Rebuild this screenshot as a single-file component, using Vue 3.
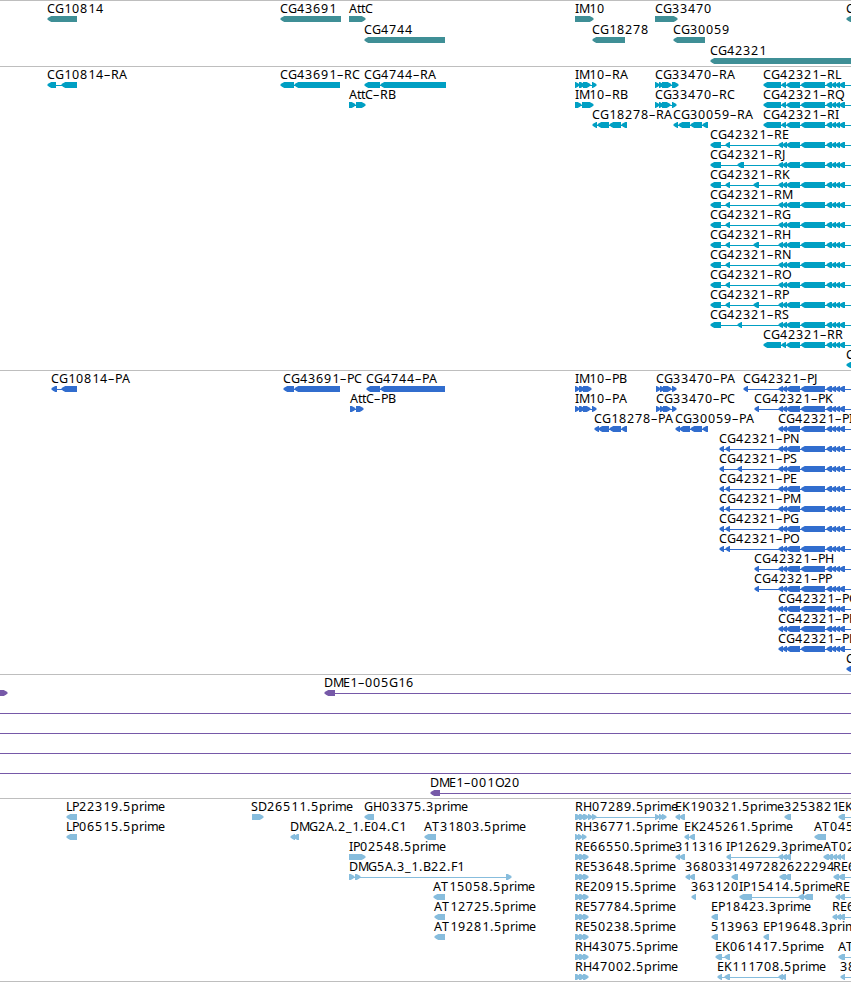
<script setup>
// Feature: [row, label, label x, exons, direction, line end]
// Exons are [start, end] pairs in track pixels.
const EDGE = 860

// exons shared by every CG42321 isoform
const tail = [[786, 800], [800.5, 825], [826, 832], [831, 836], [835, 840], [839, 845]]
const core = [[778, 783], [782, 787], ...tail]
const long = [[763, 781], [781, 786], ...tail]

const iso = (row, suffix, x, exons) => [row, 'CG42321-' + suffix, x, exons, 'l', EDGE]

const e1 = [[710, 721], [725, 730], ...core]
const e2 = [[710, 721], [725, 730], [753, 759], ...core]
const p1 = [[719, 724], [725, 730], ...core]
const p2 = [[754, 759], ...core]
const short = [[575, 581], [579, 585], [583, 589]]

const tracks = [
  {
    id: 'gene',
    color: '#3f8f96',
    height: 66,
    pitch: 21,
    features: [
      [0, 'CG10814', 47, [[47, 77]], 'l'],
      [0, 'CG43691', 280, [[280, 341]], 'l'],
      [0, 'AttC', 349, [[349, 366]], 'r'],
      [0, 'IM10', 575, [[575, 594]], 'r'],
      [0, 'CG33470', 655, [[655, 678]], 'r'],
      [0, 'C', 846, [[846, EDGE]], 'l'],
      [1, 'CG4744', 364, [[364, 445]], 'l'],
      [1, 'CG18278', 592, [[592, 625]], 'l'],
      [1, 'CG30059', 673, [[673, 705]], 'l'],
      [2, 'CG42321', 710, [[710, EDGE]], 'l'],
    ],
  },
  {
    id: 'transcript',
    color: '#009fc3',
    height: 304,
    pitch: 20,
    features: [
      [0, 'CG10814-RA', 47, [[47, 56], [61, 77]], 'l'],
      [0, 'CG43691-RC', 280, [[280, 294], [294, 340]], 'l'],
      [0, 'CG4744-RA', 364, [[364, 380], [380, 446]], 'l'],
      [0, 'IM10-RA', 575, [[575, 580], [579, 585], [583, 591], [592, 597]], 'r'],
      [0, 'CG33470-RA', 655, [[655, 660], [659, 664], [662, 672], [672, 679]], 'r'],
      iso(0, 'RL', 763, long),
      [1, 'AttC-RB', 349, [[349, 356], [356, 366]], 'r'],
      [1, 'IM10-RB', 575, [[575, 582], [582, 594]], 'r'],
      [1, 'CG33470-RC', 655, [[655, 660], [659, 664], [662, 671], [672, 677]], 'r'],
      iso(1, 'RQ', 763, long),
      [2, 'CG18278-RA', 592, [[592, 597], [597, 609], [609, 621], [621, 627]], 'l'],
      [2, 'CG30059-RA', 673, [[673, 678], [678, 690], [690, 702], [702, 708]], 'l'],
      iso(2, 'RI', 763, long),
      iso(3, 'RE', 710, e1),
      iso(4, 'RJ', 710, [[710, 721], [737, 744], ...core]),
      iso(5, 'RK', 710, e2),
      iso(6, 'RM', 710, e1),
      iso(7, 'RG', 710, e1),
      iso(8, 'RH', 710, e2),
      iso(9, 'RN', 710, e1),
      iso(10, 'RO', 710, e1),
      iso(11, 'RP', 710, e2),
      iso(12, 'RS', 710, [[710, 721], [737, 742], ...core]),
      iso(13, 'RR', 763, long),
      [14, 'C', 846, [[846, EDGE]], 'l'],
    ],
  },
  {
    id: 'protein',
    color: '#316dce',
    height: 304,
    pitch: 20,
    features: [
      [0, 'CG10814-PA', 51, [[51, 57], [61, 77]], 'l'],
      [0, 'CG43691-PC', 283, [[283, 294], [294, 340]], 'l'],
      [0, 'CG4744-PA', 366, [[366, 380], [380, 445]], 'l'],
      [0, 'IM10-PB', 575, [[575, 580], [579, 585], [583, 592]], 'r'],
      [0, 'CG33470-PA', 656, [[656, 661], [660, 665], [663, 672], [672, 677]], 'r'],
      iso(0, 'PJ', 743, [[743, 748], ...core]),
      [1, 'AttC-PB', 350, [[350, 356], [356, 364]], 'r'],
      [1, 'IM10-PA', 575, [[575, 580], [579, 585], [583, 591], [592, 597]], 'r'],
      [1, 'CG33470-PC', 656, [[656, 661], [660, 665], [663, 671], [672, 677]], 'r'],
      iso(1, 'PK', 754, p2),
      [2, 'CG18278-PA', 594, [[594, 599], [598, 609], [609, 621], [621, 627]], 'l'],
      [2, 'CG30059-PA', 675, [[675, 680], [679, 690], [690, 702], [702, 708]], 'l'],
      iso(2, 'PI', 778, core),
      iso(3, 'PN', 719, p1),
      iso(4, 'PS', 719, [[719, 724], [737, 742], ...core]),
      iso(5, 'PE', 719, p1),
      iso(6, 'PM', 719, p1),
      iso(7, 'PG', 719, p1),
      iso(8, 'PO', 719, p1),
      iso(9, 'PH', 754, p2),
      iso(10, 'PP', 754, p2),
      iso(11, 'PQ', 778, core),
      iso(12, 'PR', 778, core),
      iso(13, 'PL', 778, core),
      [14, 'C', 846, [[846, EDGE]], 'l'],
    ],
  },
  {
    id: 'bac',
    color: '#7659a8',
    height: 124,
    pitch: 20,
    features: [
      [0, '', 0, [[-10, 8]], 'r'],
      [0, 'DME1-005G16', 324, [[324, 335]], 'l', EDGE],
      [1, '', 0, [], 'l', EDGE],
      [2, '', 0, [], 'l', EDGE],
      [3, '', 0, [], 'l', EDGE],
      [4, '', 0, [], 'l', EDGE],
      [5, 'DME1-001O20', 430, [[430, 440]], 'l', EDGE],
    ],
  },
  {
    id: 'est',
    color: '#87bddd',
    height: 183,
    pitch: 20,
    features: [
      [0, 'LP22319.5prime', 66, [[66, 77]], 'l'],
      [0, 'SD26511.5prime', 251, [[252, 264]], 'r'],
      [0, 'GH03375.3prime', 364, [[364, 374]], 'l'],
      [0, 'RH07289.5prime', 575, [[575, 581], [579, 585], [583, 589], [588, 593], [592, 597], [655, 660], [659, 664], [662, 667]], 'r'],
      [0, 'EK190321.5prime', 675, [[675, 680], [679, 685]], 'l'],
      [0, '3253821', 784, [[784, 791]], 'l'],
      [0, 'EK', 838, [[838, 845]], 'l', EDGE],
      [1, 'LP06515.5prime', 66, [[66, 77]], 'l'],
      [1, 'DMG2A.2_1.E04.C1', 290, [[290, 295], [293, 299]], 'l'],
      [1, 'AT31803.5prime', 424, [[424, 436]], 'l'],
      [1, 'RH36771.5prime', 575, [[575, 580], [578, 583], [582, 587]], 'r'],
      [1, 'EK245261.5prime', 684, [[684, 689], [689, 695]], 'l'],
      [1, 'AT045', 814, [[814, 826]], 'l'],
      [2, 'IP02548.5prime', 349, [[349, 366]], 'r'],
      [2, 'RE66550.5prime', 575, short, 'r'],
      [2, '311316', 675, [[675, 680], [679, 685]], 'l'],
      [2, 'IP12629.3prime', 726, [[726, 731], [778, 783], [782, 787], [785, 791]], 'l'],
      [2, 'AT02', 823, [[823, 829], [827, 833], [832, 837], [836, 841], [840, 845]], 'l'],
      [3, 'DMG5A.3_1.B22.F1', 349, [[349, 355], [355, 361], [506, 512]], 'r'],
      [3, 'RE53648.5prime', 575, short, 'r'],
      [3, '368033', 685, [[685, 690], [689, 695]], 'l'],
      [3, '149728', 731, [[731, 738]], 'l'],
      [3, '2622294', 779, [[779, 786], [784, 791]], 'l'],
      [3, 'RE6', 833, [[833, 839], [838, 845]], 'l', EDGE],
      [4, 'AT15058.5prime', 433, [[433, 445]], 'l'],
      [4, 'RE20915.5prime', 575, short, 'r'],
      [4, '363120', 691, [[691, 696]], 'l'],
      [4, 'IP15414.5prime', 739, [[739, 752], [798, 804], [803, 813]], 'l'],
      [4, 'RE', 835, [[835, 840], [839, 845]], 'l', EDGE],
      [5, 'AT12725.5prime', 434, [[434, 445]], 'l'],
      [5, 'RE57784.5prime', 575, short, 'r'],
      [5, 'EP18423.3prime', 711, [[711, 718]], 'l'],
      [5, 'RE6', 832, [[832, 837], [836, 841], [839, 845]], 'l', EDGE],
      [6, 'AT19281.5prime', 434, [[434, 445]], 'l'],
      [6, 'RE50238.5prime', 575, short, 'r'],
      [6, '513963', 711, [[711, 718]], 'l'],
      [6, 'EP19648.3prim', 763, [[763, 769]], 'l'],
      [7, 'RH43075.5prime', 575, short, 'r'],
      [7, 'EK061417.5prime', 715, [[715, 722], [724, 730]], 'l'],
      [7, 'AT', 838, [[838, 845]], 'l', EDGE],
      [8, 'RH47002.5prime', 575, short, 'r'],
      [8, 'EK111708.5prime', 717, [[717, 722], [724, 730], [778, 783], [781, 786]], 'l'],
      [8, '38', 840, [[840, 845]], 'l', EDGE],
    ],
  },
]

// whole-pixel advances, so labels keep an even rhythm
const advance = {
  A: 8, B: 8, C: 8, D: 9, E: 7, F: 6, G: 9, H: 9, I: 4, J: 4, K: 8, L: 6, M: 10,
  N: 9, O: 9, P: 7, Q: 9, R: 8, S: 7, T: 8, '-': 7, '.': 4, _: 6,
  t: 4, p: 8, r: 5, i: 3, m: 11, e: 7,
}

function glyphX(label, x) {
  const out = []
  for (const ch of label) {
    out.push(ch === '1' ? x + 0.5 : x)
    x += advance[ch] ?? 8
  }
  return out.join(' ')
}

// the short hyphen gets lost between such widely set capitals
const display = (label) => label.replace('-', '–')

// block with a slightly rounded nose
function arrow([a, b], dir, top) {
  const tip = Math.min(5, b - a)
  const s = dir === 'l' ? 1 : -1
  const [nose, back] = dir === 'l' ? [a, b] : [b, a]
  const bulge = nose + s * tip * 0.4
  const shoulder = nose + s * tip * 0.85
  return [
    [nose, top + 3],
    [bulge, top + 1.2],
    [shoulder, top],
    [back, top],
    [back, top + 6],
    [shoulder, top + 6],
    [bulge, top + 4.8],
  ].join(' ')
}

function lineStart(f) {
  return f[3].length ? f[3][0][0] + 3 : 0
}

function lineEnd(f) {
  return f[5] ?? f[3][f[3].length - 1][1] - 3
}
</script>

<template>
  <main class="browser">
    <section v-for="t in tracks" :key="t.id" class="track">
      <svg class="canvas" width="851" :height="t.height - 1">
        <g v-for="(f, i) in t.features" :key="i">
          <rect
            v-if="f[5] || f[3].length > 1"
            :x="lineStart(f)"
            :y="f[0] * t.pitch + 18"
            :width="lineEnd(f) - lineStart(f)"
            height="1"
            :fill="t.color"
          />
          <polygon
            v-for="(e, j) in f[3]"
            :key="j"
            :points="arrow(e, f[4], f[0] * t.pitch + 15)"
            :fill="t.color"
          />
          <text v-if="f[1]" class="label" :x="glyphX(f[1], f[2])" :y="f[0] * t.pitch + 12">{{ display(f[1]) }}</text>
        </g>
      </svg>
    </section>
  </main>
</template>

<style>
body {
  margin: 0;
  background: #fff;
}
</style>

<style scoped>
.browser {
  width: 851px;
  height: 982px;
  overflow: hidden;
  background: #fff;
}

.track {
  border-top: 1px solid #bebebe;
}

.track:last-child {
  border-bottom: 1px solid #bebebe;
}

.canvas {
  display: block;
  overflow: hidden;
}

.label {
  font-family: 'Noto Sans', 'Open Sans', sans-serif;
  font-size: 12.5px;
  fill: #000;
}
</style>
